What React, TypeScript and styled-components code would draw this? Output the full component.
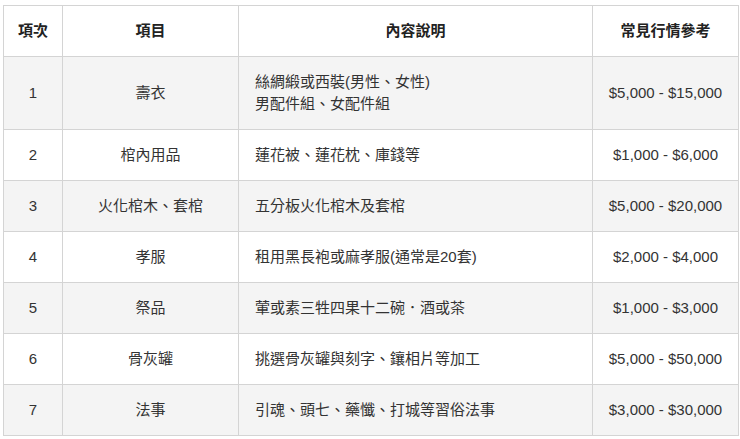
import React from "react";
import styled, { createGlobalStyle } from "styled-components";

const Global = createGlobalStyle`
  html, body { margin: 0; padding: 0; background: #fff; }
  body { font-family: "Liberation Sans", "Noto Sans CJK TC", sans-serif; }
`;

const Wrap = styled.div`
  padding: 5px 2px 0 3px;
`;

const Table = styled.table`
  width: 735px;
  border-collapse: collapse;
  table-layout: fixed;
  font-size: 15px;
  line-height: 22px;
  color: #333;
`;

const Th = styled.th<{ $w: number }>`
  width: ${(p) => p.$w}px;
  height: 51px;
  padding: 0 8px;
  box-sizing: border-box;
  border: 1px solid #d4d4d4;
  font-weight: bold;
  color: #222;
  text-align: center;
  background: #fff;
`;

const Row = styled.tr<{ $alt: boolean }>`
  background: ${(p) => (p.$alt ? "#f4f4f4" : "#fff")};
`;

const Td = styled.td<{ $left?: boolean }>`
  border: 1px solid #d4d4d4;
  padding: 14px ${(p) => (p.$left ? "16px" : "8px")};
  text-align: ${(p) => (p.$left ? "left" : "center")};
  vertical-align: middle;
`;

const rows = [
  ["1", "壽衣", ["絲綢緞或西裝(男性、女性)", "男配件組、女配件組"], "$5,000 - $15,000"],
  ["2", "棺內用品", ["蓮花被、蓮花枕、庫錢等"], "$1,000 - $6,000"],
  ["3", "火化棺木、套棺", ["五分板火化棺木及套棺"], "$5,000 - $20,000"],
  ["4", "孝服", ["租用黑長袍或麻孝服(通常是20套)"], "$2,000 - $4,000"],
  ["5", "祭品", ["葷或素三牲四果十二碗．酒或茶"], "$1,000 - $3,000"],
  ["6", "骨灰罐", ["挑選骨灰罐與刻字、鑲相片等加工"], "$5,000 - $50,000"],
  ["7", "法事", ["引魂、頭七、藥懺、打城等習俗法事"], "$3,000 - $30,000"],
] as const;

export default function App() {
  return (
    <>
      <Global />
      <Wrap>
        <Table>
          <thead>
            <tr>
              <Th $w={59}>項次</Th>
              <Th $w={176}>項目</Th>
              <Th $w={354}>內容說明</Th>
              <Th $w={146}>常見行情參考</Th>
            </tr>
          </thead>
          <tbody>
            {rows.map((r, i) => (
              <Row key={r[0]} $alt={i % 2 === 0}>
                <Td>{r[0]}</Td>
                <Td>{r[1]}</Td>
                <Td $left>
                  {r[2].map((l, j) => (
                    <React.Fragment key={j}>
                      {j > 0 && <br />}
                      {l}
                    </React.Fragment>
                  ))}
                </Td>
                <Td>{r[3]}</Td>
              </Row>
            ))}
          </tbody>
        </Table>
      </Wrap>
    </>
  );
}
